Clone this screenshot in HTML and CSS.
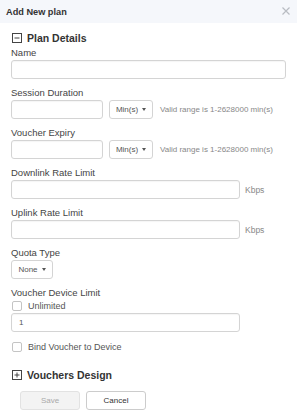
FILE: index.html
```html
<!DOCTYPE html>
<html lang="en">
<head>
    <meta charset="UTF-8">
    <meta name="viewport" content="width=device-width, initial-scale=1.0">
    <title>Add New plan</title>
    <link rel="stylesheet" href="styles.css">
</head>
<body>
    <div class="modal">
        <div class="modal-header">
            <span class="modal-title">Add New plan</span>
            <svg class="close" width="8" height="8" viewBox="0 0 8 8">
                <path d="M0.5 0.5 L7.5 7.5 M7.5 0.5 L0.5 7.5" stroke="#b8bcc2" stroke-width="1.2" fill="none"/>
            </svg>
        </div>

        <div class="modal-body">
            <div class="section-title">
                <svg class="toggle" width="10" height="10" viewBox="0 0 10 10">
                    <rect x="0.5" y="0.5" width="9" height="9" fill="none" stroke="#444" stroke-width="1"/>
                    <path d="M2.5 5 H7.5" stroke="#444" stroke-width="1"/>
                </svg>
                <span>Plan Details</span>
            </div>

            <div class="field">
                <label>Name</label>
                <input type="text" class="input input-full">
            </div>

            <div class="field">
                <label>Session Duration</label>
                <div class="row">
                    <input type="text" class="input input-short">
                    <div class="dropdown dropdown-unit">Min(s) <span class="caret"></span></div>
                    <span class="hint">Valid range is 1-2628000 min(s)</span>
                </div>
            </div>

            <div class="field">
                <label>Voucher Expiry</label>
                <div class="row">
                    <input type="text" class="input input-short">
                    <div class="dropdown dropdown-unit">Min(s) <span class="caret"></span></div>
                    <span class="hint">Valid range is 1-2628000 min(s)</span>
                </div>
            </div>

            <div class="field">
                <label>Downlink Rate Limit</label>
                <div class="row">
                    <input type="text" class="input input-mid">
                    <span class="unit">Kbps</span>
                </div>
            </div>

            <div class="field">
                <label>Uplink Rate Limit</label>
                <div class="row">
                    <input type="text" class="input input-mid">
                    <span class="unit">Kbps</span>
                </div>
            </div>

            <div class="field">
                <label>Quota Type</label>
                <div class="dropdown dropdown-quota">None <span class="caret"></span></div>
            </div>

            <div class="field">
                <label>Voucher Device Limit</label>
                <div class="check-row">
                    <input type="checkbox" class="check">
                    <span>Unlimited</span>
                </div>
                <input type="text" class="input input-mid input-value" value="1">
            </div>

            <div class="check-row bind-row">
                <input type="checkbox" class="check">
                <span>Bind Voucher to Device</span>
            </div>

            <div class="section-title section-design">
                <svg class="toggle" width="10" height="10" viewBox="0 0 10 10">
                    <rect x="0.5" y="0.5" width="9" height="9" fill="none" stroke="#444" stroke-width="1"/>
                    <path d="M2.5 5 H7.5 M5 2.5 V7.5" stroke="#444" stroke-width="1"/>
                </svg>
                <span>Vouchers Design</span>
            </div>

            <div class="actions">
                <button class="btn btn-save" disabled>Save</button>
                <button class="btn btn-cancel">Cancel</button>
            </div>
        </div>
    </div>
</body>
</html>
```

FILE: styles.css
```css
/* General Styles */
body {
    margin: 0;
    font-family: "Liberation Sans", Arial, sans-serif;
    color: #444;
    background-color: #fff;
}

.modal {
    width: 297px;
    height: 420px;
    overflow: hidden;
}

.modal-header {
    height: 23px;
    display: flex;
    align-items: center;
    justify-content: space-between;
    padding: 0 7px 0 6px;
    background-color: #f5f7fb;
}

.modal-title {
    font-size: 9.2px;
    font-weight: bold;
    color: #333;
}

.close {
    margin-top: -1px;
}

.modal-body {
    padding: 7px 11px 0 11px;
}

/* Section headings */
.section-title {
    display: flex;
    align-items: center;
    gap: 5px;
    height: 15px;
    margin-left: 1px;
    font-size: 10.5px;
    font-weight: bold;
    color: #333;
}

.section-design {
    margin-top: 14px;
}

/* Fields */
.field {
    margin-bottom: 8px;
}

.field label {
    display: block;
    height: 12px;
    line-height: 12px;
    margin-bottom: 1px;
    font-size: 9.5px;
    color: #444;
}

.section-title + .field {
    margin-top: 2px;
}

.row {
    display: flex;
    align-items: center;
}

.input {
    display: block;
    height: 19px;
    box-sizing: border-box;
    border: 1px solid #d4d4d4;
    border-radius: 3px;
    padding: 0 7px;
    font-family: inherit;
    font-size: 8px;
    color: #555;
    background-color: #fff;
    box-shadow: inset 0 1px 1px rgba(0, 0, 0, 0.04);
}

.input-full {
    width: 275px;
}

.input-short {
    width: 92px;
}

.input-mid {
    width: 229px;
}

.dropdown {
    display: flex;
    align-items: center;
    justify-content: center;
    gap: 4px;
    height: 19px;
    box-sizing: border-box;
    border: 1px solid #d4d4d4;
    border-radius: 3px;
    font-size: 8px;
    color: #555;
    background-color: #fff;
}

.dropdown-unit {
    width: 44px;
    margin-left: 6px;
}

.dropdown-quota {
    width: 42px;
}

.caret {
    width: 0;
    height: 0;
    border-left: 2.5px solid transparent;
    border-right: 2.5px solid transparent;
    border-top: 3px solid #555;
}

.hint {
    margin-left: 7px;
    font-size: 8px;
    color: #888;
    white-space: nowrap;
}

.unit {
    margin-left: 5px;
    font-size: 8.5px;
    color: #888;
}

/* Checkboxes */
.check-row {
    display: flex;
    align-items: center;
    gap: 6px;
    height: 12px;
    margin: 0 0 1px 1px;
    font-size: 9px;
    color: #555;
}

.check {
    appearance: none;
    -webkit-appearance: none;
    width: 10px;
    height: 10px;
    margin: 0;
    border: 1px solid #c4c4c4;
    border-radius: 2px;
    background-color: #fff;
}

.bind-row {
    margin-top: 9px;
}

/* Buttons */
.actions {
    display: flex;
    gap: 6px;
    margin: 9px 0 0 9px;
}

.btn {
    width: 60px;
    height: 19px;
    box-sizing: border-box;
    border-radius: 3px;
    font-family: inherit;
    font-size: 8px;
    padding: 0;
}

.btn-save {
    background-color: #f3f3f3;
    border: 1px solid #e2e2e2;
    color: #aaa;
}

.btn-cancel {
    background-color: #fff;
    border: 1px solid #ccc;
    color: #333;
}
```
